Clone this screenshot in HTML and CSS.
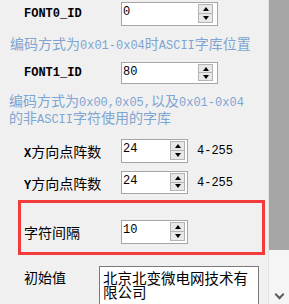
FILE: index.html
```html
<!DOCTYPE html>
<html lang="zh-CN">
<head>
    <meta charset="UTF-8">
    <title>字库设置</title>
    <link rel="stylesheet" href="styles.css">
</head>
<body>

    <div class="panel">
        <div class="row row-first">
            <span class="label lat-label">FONT0_ID</span>
            <div class="spin wide">
                <span class="val">0</span>
                <div class="btns"><span class="up"></span><span class="down"></span></div>
            </div>
        </div>
        <p class="hint hint-one">编码方式为<span class="lat">0x01-0x04</span>时<span class="lat">ASCII</span>字库位置</p>

        <div class="row row-second">
            <span class="label lat-label">FONT1_ID</span>
            <div class="spin wide">
                <span class="val">80</span>
                <div class="btns"><span class="up"></span><span class="down"></span></div>
            </div>
        </div>
        <p class="hint hint-two">编码方式为<span class="lat">0x00,0x05,</span>以及<span class="lat">0x01-0x04</span><br>的非<span class="lat">ASCII</span>字符使用的字库</p>

        <div class="row row-x">
            <span class="label"><span class="lat-b">X</span>方向点阵数</span>
            <div class="spin">
                <span class="val">24</span>
                <div class="btns"><span class="up"></span><span class="down"></span></div>
            </div>
            <span class="range">4-255</span>
        </div>

        <div class="row row-y">
            <span class="label"><span class="lat-b">Y</span>方向点阵数</span>
            <div class="spin">
                <span class="val">24</span>
                <div class="btns"><span class="up"></span><span class="down"></span></div>
            </div>
            <span class="range">4-255</span>
        </div>

        <div class="marked">
            <div class="row">
                <span class="label">字符间隔</span>
                <div class="spin">
                    <span class="val">10</span>
                    <div class="btns"><span class="up"></span><span class="down"></span></div>
                </div>
            </div>
        </div>

        <div class="row row-init">
            <span class="label label-init">初始值</span>
            <div class="memo">北京北变微电网技术有限公司</div>
        </div>
    </div>

    <div class="scrollbar">
        <div class="thumb"></div>
        <div class="track"><span class="chev"></span></div>
    </div>

</body>
</html>
```

FILE: styles.css
```css
* {
    margin: 0;
    padding: 0;
    box-sizing: border-box;
}

body {
    width: 289px;
    height: 304px;
    overflow: hidden;
    display: flex;
    background-color: #f0f0f0;
    font-family: "Noto Sans CJK SC", sans-serif;
    font-size: 14px;
    color: #000;
}

.panel {
    width: 268px;
    height: 304px;
    padding-top: 2px;
}

.row {
    display: flex;
    align-items: center;
    height: 24px;
    padding-left: 24px;
}

.label {
    width: 97px;
    line-height: 18px;
}

.lat-label {
    font-family: "Liberation Mono", monospace;
    font-weight: bold;
    font-size: 12px;
}

.lat-b {
    font-family: "Liberation Mono", monospace;
    font-weight: bold;
    font-size: 12px;
    line-height: 1;
}

.row-second {
    margin-top: 10px;
    height: 22px;
}

.row-x {
    margin-top: 13px;
}

.row-y {
    margin-top: 8px;
    height: 23px;
}

/* spin edit */
.spin {
    display: flex;
    width: 67px;
    height: 100%;
    background: #fff;
    border: 1px solid #a5a5a5;
    padding: 1px 2px 2px 1px;
}

.spin.wide {
    width: 97px;
    padding-right: 4px;
}

.val {
    flex: 1;
    font-family: "Liberation Mono", monospace;
    font-size: 12px;
    line-height: 14px;
    padding-top: 1px;
}

.btns {
    width: 15px;
    display: flex;
    flex-direction: column;
    border: 1px solid #b4b4b4;
    background: #e8e8e8;
}

.btns span {
    flex: 1;
    display: flex;
    align-items: center;
    justify-content: center;
}

.btns .down {
    border-top: 1px solid #b4b4b4;
}

.btns .up::after,
.btns .down::after {
    content: "";
    border-left: 3px solid transparent;
    border-right: 3px solid transparent;
}

.btns .up::after {
    border-bottom: 4px solid #000;
}

.btns .down::after {
    border-top: 4px solid #000;
}

.range {
    margin-left: 9px;
    font-family: "Liberation Mono", monospace;
    font-size: 12px;
}

.hint {
    color: #7fa5d2;
    line-height: 17px;
    padding-left: 10px;
}

.hint .lat {
    font-family: "Liberation Mono", monospace;
    font-size: 12px;
    line-height: 1;
}

.hint-one {
    margin-top: 9px;
}

.hint-two {
    margin-top: 8px;
    padding-left: 9px;
}

/* red highlight around spacing */
.marked {
    width: 247px;
    height: 55px;
    margin-left: 18px;
    margin-top: 6px;
    border: 3px solid #f23b3b;
    padding-top: 17px;
}

.marked .row {
    padding-left: 3px;
}

.row-init {
    align-items: flex-start;
    height: 40px;
    margin-top: 11px;
}

.label-init {
    width: 75px;
    padding-top: 2px;
}

.memo {
    width: 160px;
    height: 50px;
    background: #fff;
    border: 1px solid #7a7a7a;
    padding: 4px 3px;
    font-size: 14.5px;
    line-height: 14px;
}

/* scroll bar */
.scrollbar {
    width: 21px;
    border-left: 1px solid #e2e2e2;
    display: flex;
    flex-direction: column;
}

.thumb {
    height: 250px;
    background: #a6a6a6;
}

.track {
    flex: 1;
    background: #f5f5f5;
    display: flex;
    align-items: flex-end;
    justify-content: center;
    padding-bottom: 6px;
}

.chev {
    width: 7px;
    height: 7px;
    border-right: 2px solid #5a5a5a;
    border-bottom: 2px solid #5a5a5a;
    transform: rotate(45deg);
}
```
